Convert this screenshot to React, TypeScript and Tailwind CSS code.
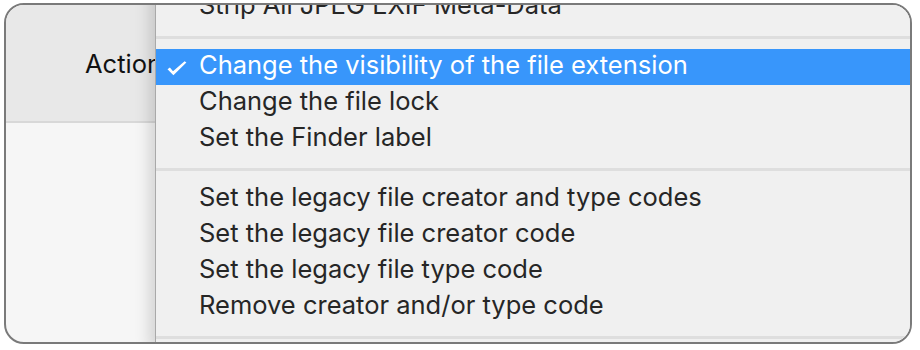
import React from 'react';

type Entry = { label: string; checked?: boolean } | 'separator';

const items: Entry[] = [
  { label: 'Strip All JPEG EXIF Meta-Data' },
  'separator',
  { label: 'Change the visibility of the file extension', checked: true },
  { label: 'Change the file lock' },
  { label: 'Set the Finder label' },
  'separator',
  { label: 'Set the legacy file creator and type codes' },
  { label: 'Set the legacy file creator code' },
  { label: 'Set the legacy file type code' },
  { label: 'Remove creator and/or type code' },
  'separator',
];

function MenuRow({ label, checked }: { label: string; checked?: boolean }) {
  return (
    <div
      className={`relative h-[36px] flex items-center pl-[43px] pb-[3px] whitespace-nowrap ${
        checked ? 'bg-[#3896fb] text-white' : 'text-[#262626]'
      }`}
    >
      {checked && (
        <svg
          className="absolute left-[11px] top-[12px]"
          width="20"
          height="15"
          viewBox="0 0 20 15"
          fill="white"
        >
          <path d="M0.5 8.2 L2.9 6.4 L6 10.2 L17.6 0.3 L19.4 1.6 L6.4 14.2 Z" />
        </svg>
      )}
      <span>{label}</span>
    </div>
  );
}

export default function App() {
  return (
    <div className="w-[920px] h-[350px] bg-white pt-[3px] pl-[4px] font-['Inter','Liberation_Sans',sans-serif] text-[25.5px]">
      <div className="relative w-[908px] h-[341px] border-2 border-[#7a7a7a] rounded-[20px] overflow-hidden bg-[#f6f6f6]">
        {/* window behind the menu */}
        <div className="h-[118px] bg-[#e8e8e8] border-b-2 border-[#d8d8d8] pl-[79px] pt-[43px]">
          <div className="h-[36px] pb-[3px] flex items-center text-[#111]">Action:</div>
        </div>

        {/* popup menu */}
        <div className="absolute top-[-16px] left-[149px] w-[800px] bg-[#f0f0f0] border-l border-[#a9a9a9] shadow-[-6px_0_14px_rgba(0,0,0,0.14)]">
          {items.map((it, i) =>
            it === 'separator' ? (
              <div key={i} className="h-[24px] pt-[11px]">
                <div className="h-[3px] bg-[#dedede]" />
              </div>
            ) : (
              <MenuRow key={i} label={it.label} checked={it.checked} />
            )
          )}
        </div>
      </div>
    </div>
  );
}
